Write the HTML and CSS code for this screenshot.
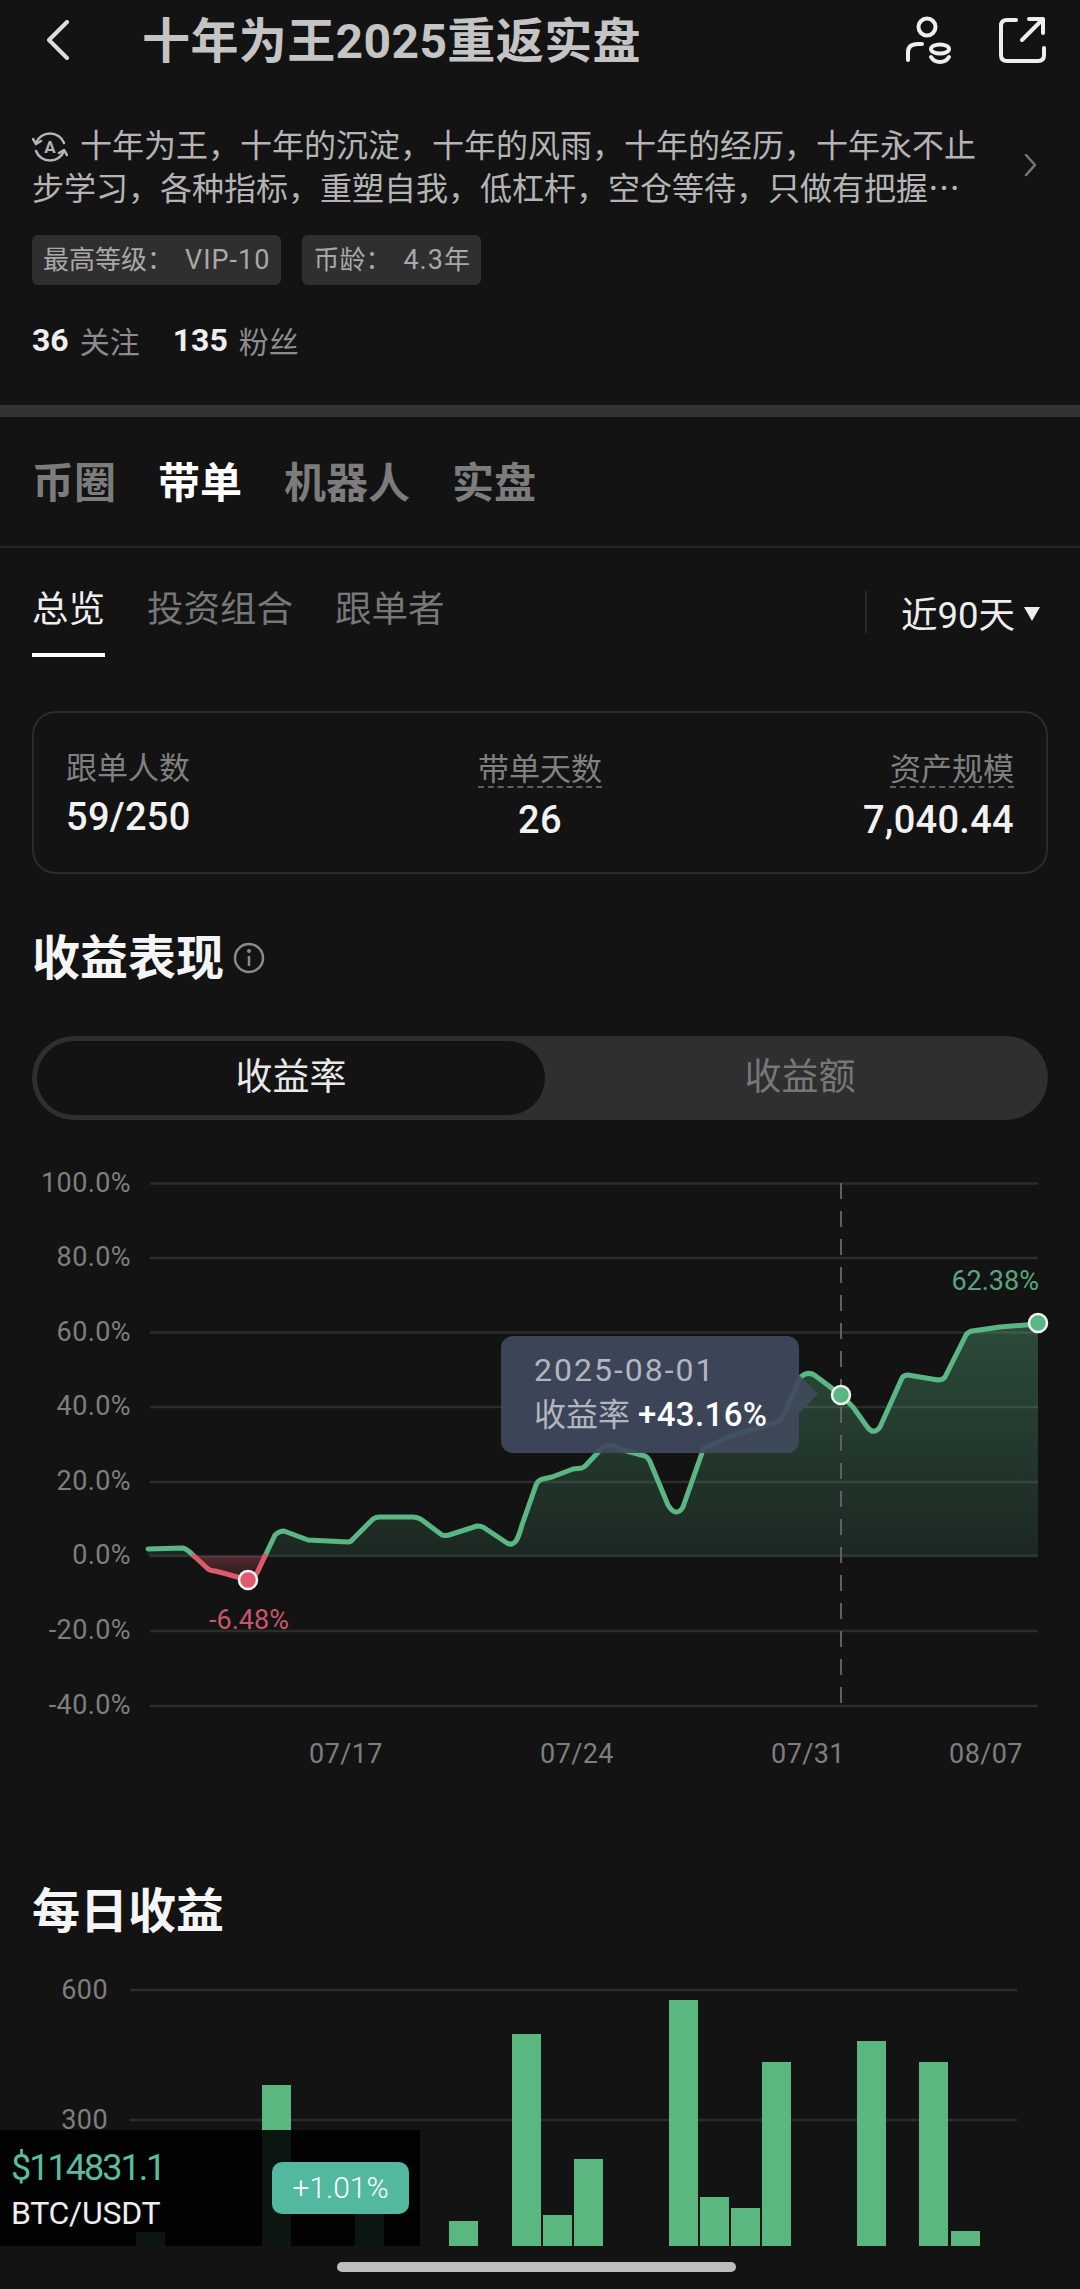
FILE: index.html
```html
<!DOCTYPE html>
<html lang="zh-CN">
<head>
  <meta charset="UTF-8" />
  <title>十年为王2025重返实盘</title>
  <meta name="viewport" content="width=device-width, initial-scale=1" />
  <link rel="stylesheet" href="styles.css">
</head>
<body>

  <header class="topbar">
    <svg class="back" width="24" height="40" viewBox="0 0 24 40"><path d="M21 2 L3 20 L21 38"/></svg>
    <h1 class="title">十年为王2025重返实盘</h1>
    <svg class="top-icon" width="56" height="52" viewBox="0 0 56 52">
      <circle cx="23" cy="13" r="8.5"/>
      <path d="M4 46 V38 Q4 30 14 30 H18"/>
      <ellipse cx="36" cy="35" rx="9" ry="4.5"/>
      <path d="M27 43 Q30 48 36 48 Q42 48 45 43"/>
    </svg>
    <svg class="top-icon share" width="52" height="52" viewBox="0 0 52 52">
      <path d="M20 6 H11 Q5 6 5 12 V41 Q5 47 11 47 H42 Q48 47 48 41 V34"/>
      <path d="M26 26 L47 5 M33 5 H47 V19"/>
    </svg>
  </header>

  <section class="bio">
    <div class="bio-text">
      <svg class="bio-icon" width="36" height="36" viewBox="0 0 36 36">
        <path d="M4 14 A15 15 0 0 1 32 14"/>
        <path d="M32 22 A15 15 0 0 1 4 22"/>
        <path d="M1 10 L4 15 L9 12 M35 26 L32 21 L27 24"/>
        <text x="18" y="24" text-anchor="middle">A</text>
      </svg>十年为王，十年的沉淀，十年的风雨，十年的经历，十年永不止<br>步学习，各种指标，重塑自我，低杠杆，空仓等待，只做有把握…
    </div>
    <svg class="bio-more" width="14" height="24" viewBox="0 0 14 24"><path d="M2 2 L11 12 L2 22"/></svg>
  </section>

  <div class="tags">
    <span class="tag">最高等级：<span class="tag-num">VIP-10</span></span>
    <span class="tag">币龄：<span class="tag-num">4.3</span>年</span>
  </div>

  <div class="follow">
    <b>36</b><span>关注</span>
    <b class="fans">135</b><span>粉丝</span>
  </div>

  <div class="band"></div>

  <nav class="tabs">
    <a>币圈</a>
    <a class="on">带单</a>
    <a>机器人</a>
    <a>实盘</a>
  </nav>

  <nav class="subtabs">
    <a class="on">总览</a>
    <a>投资组合</a>
    <a>跟单者</a>
    <div class="range">近90天<i class="caret"></i></div>
  </nav>

  <section class="card">
    <div class="stat">
      <div class="stat-label">跟单人数</div>
      <div class="stat-value">59/250</div>
    </div>
    <div class="stat stat-mid">
      <div class="stat-label"><span>带单天数</span></div>
      <div class="stat-value">26</div>
    </div>
    <div class="stat stat-end">
      <div class="stat-label"><span>资产规模</span></div>
      <div class="stat-value">7,040.44</div>
    </div>
  </section>

  <h2 class="heading">收益表现
    <svg class="info" width="32" height="32" viewBox="0 0 32 32">
      <circle cx="16" cy="16" r="14"/>
      <path d="M16 14 V24"/>
      <circle class="info-dot" cx="16" cy="9" r="2"/>
    </svg>
  </h2>

  <div class="segment">
    <div class="seg on">收益率</div>
    <div class="seg">收益额</div>
  </div>

  <section class="chart">
    <svg class="chart-svg" width="1080" height="670" viewBox="0 1120 1080 670">
      <defs>
        <linearGradient id="areaGreen" x1="0" y1="0" x2="0" y2="1">
          <stop offset="0" stop-color="#5ab784" stop-opacity="0.34"/>
          <stop offset="1" stop-color="#5ab784" stop-opacity="0.13"/>
        </linearGradient>
        <linearGradient id="areaRed" x1="0" y1="0" x2="0" y2="1">
          <stop offset="0" stop-color="#dd5a6a" stop-opacity="0.32"/>
          <stop offset="1" stop-color="#dd5a6a" stop-opacity="0.08"/>
        </linearGradient>
      </defs>

      <g class="grid">
        <path d="M150 1183.5 H1038"/>
        <path d="M150 1258 H1038"/>
        <path d="M150 1332.5 H1038"/>
        <path d="M150 1407 H1038"/>
        <path d="M150 1482 H1038"/>
        <path d="M150 1556 H1038"/>
        <path d="M150 1631 H1038"/>
        <path d="M150 1706 H1038"/>
      </g>

      <g class="axis-y">
        <text x="131" y="1192">100.0%</text>
        <text x="131" y="1266">80.0%</text>
        <text x="131" y="1341">60.0%</text>
        <text x="131" y="1415">40.0%</text>
        <text x="131" y="1490">20.0%</text>
        <text x="131" y="1564">0.0%</text>
        <text x="131" y="1639">-20.0%</text>
        <text x="131" y="1714">-40.0%</text>
      </g>

      <g class="axis-x">
        <text x="346" y="1763">07/17</text>
        <text x="577" y="1763">07/24</text>
        <text x="808" y="1763">07/31</text>
        <text x="986" y="1763">08/07</text>
      </g>

      <path class="area-red" d="M194 1556 L207 1568 Q210 1571 215 1571 L223 1573 L248 1580 L257 1573 L265 1556 Z"/>
      <path class="area-green" d="M148 1556 V1549 L183 1548 L194 1556 Z M265 1556 L275 1535 Q279 1531 284 1531 L308 1540 L348 1542 Q351 1542 353 1539 L373 1519 Q376 1517 380 1517 L413 1517 Q418 1517 422 1520 L442 1535 Q445 1536 449 1535 L477 1526 Q480 1526 483 1527 L507 1543 Q512 1546 516 1541 Q519 1536 522 1525 L536 1485 Q538 1480 543 1479 L552 1477 L573 1469 L582 1468 Q585 1467 588 1463 L603 1447 Q610 1443 623 1450 L645 1456 Q649 1458 651 1464 L668 1505 Q676 1518 683 1507 L703 1450 Q705 1447 709 1446 L733 1435 L777 1422 Q781 1421 783 1416 L800 1378 Q808 1369 817 1377 L841 1395 L853 1407 L868 1428 Q874 1435 880 1427 L902 1378 Q904 1375 908 1375 L938 1380 Q943 1380 945 1377 L966 1335 Q968 1332 972 1331 L1000 1327 L1038 1324 V1556 Z"/>

      <path class="dash" d="M841 1183 V1706"/>

      <path class="line-green" d="M148 1549 L183 1548 Q187 1549 194 1556 M265 1556 L275 1535 Q279 1531 284 1531 L308 1540 L348 1542 Q351 1542 353 1539 L373 1519 Q376 1517 380 1517 L413 1517 Q418 1517 422 1520 L442 1535 Q445 1536 449 1535 L477 1526 Q480 1526 483 1527 L507 1543 Q512 1546 516 1541 Q519 1536 522 1525 L536 1485 Q538 1480 543 1479 L552 1477 L573 1469 L582 1468 Q585 1467 588 1463 L603 1447 Q610 1443 623 1450 L645 1456 Q649 1458 651 1464 L668 1505 Q676 1518 683 1507 L703 1450 Q705 1447 709 1446 L733 1435 L777 1422 Q781 1421 783 1416 L800 1378 Q808 1369 817 1377 L841 1395 L853 1407 L868 1428 Q874 1435 880 1427 L902 1378 Q904 1375 908 1375 L938 1380 Q943 1380 945 1377 L966 1335 Q968 1332 972 1331 L1000 1327 L1038 1324"/>
      <path class="line-red" d="M194 1556 L207 1568 Q210 1571 215 1571 L223 1573 L248 1580 L257 1573 L265 1556"/>

      <circle class="dot-red" cx="248" cy="1580" r="9"/>
      <circle class="dot-green" cx="841" cy="1395" r="9"/>
      <circle class="dot-green" cx="1038" cy="1323" r="9"/>

      <text class="note-red" x="249" y="1629">-6.48%</text>
      <text class="note-green" x="1039" y="1290">62.38%</text>
    </svg>

    <div class="tip">
      <div class="tip-date">2025-08-01</div>
      <div class="tip-row">收益率 <b>+43.16%</b></div>
    </div>
  </section>

  <h2 class="heading heading-daily">每日收益</h2>

  <section class="bars">
    <svg width="1080" height="349" viewBox="0 1940 1080 349">
      <g class="grid">
        <path d="M130 1990 H1017"/>
        <path d="M130 2120 H1017"/>
      </g>
      <g class="axis-y">
        <text x="108" y="1999">600</text>
        <text x="108" y="2129">300</text>
      </g>
      <g class="bar">
        <rect x="136" y="2232" width="29" height="14"/>
        <rect x="262" y="2085" width="29" height="161"/>
        <rect x="355" y="2213" width="29" height="33"/>
        <rect x="449" y="2221" width="29" height="25"/>
        <rect x="512" y="2034" width="29" height="212"/>
        <rect x="543" y="2215" width="29" height="31"/>
        <rect x="574" y="2159" width="29" height="87"/>
        <rect x="669" y="2000" width="29" height="246"/>
        <rect x="700" y="2197" width="29" height="49"/>
        <rect x="731" y="2208" width="29" height="38"/>
        <rect x="762" y="2062" width="29" height="184"/>
        <rect x="857" y="2041" width="29" height="205"/>
        <rect x="919" y="2062" width="29" height="184"/>
        <rect x="951" y="2231" width="29" height="15"/>
      </g>
    </svg>
  </section>

  <div class="ticker">
    <div class="ticker-info">
      <div class="ticker-price">$114831.1</div>
      <div class="ticker-pair">BTC/USDT</div>
    </div>
    <div class="ticker-change">+1.01%</div>
  </div>

  <div class="home-bar"></div>

</body>
</html>
```

FILE: styles.css
```css
* { box-sizing: border-box; }

body {
  position: relative;
  width: 1080px;
  height: 2289px;
  margin: 0;
  overflow: hidden;
  background-color: #131313;
  color: #fff;
  font-family: Roboto, "Noto Sans CJK SC", sans-serif;
}

/* top bar */
.topbar {
  display: flex;
  align-items: center;
  height: 80px;
  padding: 0 32px 0 46px;
}
.back { flex: none; }
.back path {
  fill: none;
  stroke: #ddd;
  stroke-width: 4;
  stroke-linecap: round;
  stroke-linejoin: round;
}
.title {
  flex: 1;
  margin: 0 0 6px 72px;
  font-size: 48px;
  font-weight: 700;
  letter-spacing: 0.4px;
  color: #c4c4c4;
  white-space: nowrap;
}
.top-icon path, .top-icon circle, .top-icon ellipse {
  fill: none;
  stroke: #eee;
  stroke-width: 4;
  stroke-linecap: round;
  stroke-linejoin: round;
}
.share { margin-left: 36px; }

/* bio */
.bio {
  display: flex;
  align-items: center;
  justify-content: space-between;
  padding: 42px 42px 0 32px;
}
.bio-text {
  font-family: "Noto Sans CJK SC", sans-serif;
  font-size: 32px;
  line-height: 42px;
  color: #b4b4b4;
  white-space: nowrap;
}
.bio-icon {
  margin-right: 12px;
  vertical-align: -8px;
}
.bio-icon path {
  fill: none;
  stroke: #b4b4b4;
  stroke-width: 2.5;
  stroke-linecap: round;
  stroke-linejoin: round;
}
.bio-icon text {
  font-size: 17px;
  font-weight: 700;
  fill: #b4b4b4;
}
.bio-more path {
  fill: none;
  stroke: #777;
  stroke-width: 2.5;
  stroke-linecap: round;
  stroke-linejoin: round;
}

.tags {
  display: flex;
  gap: 21px;
  margin: 28px 0 0 32px;
}
.tag {
  height: 50px;
  padding: 0 11px;
  border-radius: 6px;
  background-color: #2f2f2f;
  color: #a8a8a8;
  font-size: 26px;
  line-height: 50px;
}
.tag-num {
  margin-left: 12px;
  font-size: 27px;
  letter-spacing: 1px;
}

.follow {
  display: flex;
  align-items: center;
  height: 40px;
  margin: 35px 0 0 32px;
  font-size: 30px;
  color: #8c8c8c;
}
.follow b { margin-right: 11px; font-size: 32px; color: #eee; font-weight: 700; }
.follow .fans { margin-left: 33px; }

.band {
  height: 12px;
  margin-top: 45px;
  background-color: #333;
}

/* tabs */
.tabs {
  display: flex;
  align-items: center;
  gap: 42px;
  height: 131px;
  padding: 0 0 5px 32px;
  border-bottom: 2px solid #262626;
  font-size: 42px;
  font-weight: 700;
  color: #7c7c7c;
}
.tabs .on { color: #fff; }

.subtabs {
  display: flex;
  gap: 42px;
  height: 109px;
  padding: 37px 32px 0;
  font-size: 36.5px;
  color: #777;
}
.subtabs a { height: 72px; line-height: 50px; }
.subtabs .on {
  border-bottom: 4px solid #fff;
  color: #eee;
}
.range {
  display: flex;
  align-items: center;
  height: 42px;
  margin: 6px 8px 0 auto;
  padding-left: 34px;
  border-left: 2px solid #2a2a2a;
  color: #eee;
}
.caret {
  width: 0;
  height: 0;
  margin: 4px 0 0 9px;
  border-left: 8px solid transparent;
  border-right: 8px solid transparent;
  border-top: 14px solid #eee;
}

/* summary card */
.card {
  display: grid;
  grid-template-columns: 1fr auto 1fr;
  height: 163px;
  margin: 54px 32px 0;
  padding: 36px 32px 0;
  border: 2px solid #2b2b2b;
  border-radius: 24px;
}
.stat-label {
  height: 40px;
  font-size: 31px;
  line-height: 40px;
  color: #808080;
}
.stat-value {
  margin-top: 6px;
  font-size: 38px;
  font-weight: 500;
  line-height: 44px;
  letter-spacing: 0.3px;
  color: #f2f2f2;
}
.stat-mid { text-align: center; }
.stat-end { text-align: right; }
.stat-mid, .stat-end { margin-top: 1px; }
.stat-mid .stat-value, .stat-end .stat-value { margin-top: 8px; }
.stat-label span {
  display: inline-block;
  height: 38px;
  border-bottom: 2px dashed #5f5f5f;
}

/* section titles */
.heading {
  display: flex;
  align-items: center;
  gap: 9px;
  height: 60px;
  margin: 50px 0 0 32px;
  font-size: 48px;
  font-weight: 700;
  color: #f5f5f5;
}
.heading-daily { margin: 87px 0 3px 32px; }
.info { margin-top: 8px; }
.info circle, .info path {
  fill: none;
  stroke: #8a8a8a;
  stroke-width: 2.5;
}
.info .info-dot { fill: #8a8a8a; stroke: none; }

/* segmented control */
.segment {
  display: flex;
  height: 84px;
  margin: 52px 32px 0;
  padding: 5px;
  border-radius: 42px;
  background-color: #2f2f2f;
  font-size: 37px;
  color: #777;
}
.seg {
  flex: 1;
  padding-left: 12px;
  border-radius: 37px;
  line-height: 74px;
  text-align: center;
}
.seg.on {
  flex: none;
  width: 508px;
  padding-left: 0;
  background-color: #131313;
  color: #e8e8e8;
}

/* charts */
.chart { position: relative; height: 670px; }
svg text { font-family: Roboto, "Noto Sans CJK SC", sans-serif; }
.chart-svg, .bars svg { display: block; }
.grid path { fill: none; stroke: #2c2c2c; stroke-width: 2.5; }
.axis-y text { font-size: 27px; letter-spacing: 0.4px; fill: #7e7e7e; text-anchor: end; }
.axis-x text { font-size: 27px; letter-spacing: 0.4px; fill: #7e7e7e; text-anchor: middle; }
.area-green { fill: url(#areaGreen); }
.area-red { fill: url(#areaRed); }
.dash { fill: none; stroke: #606060; stroke-width: 2; stroke-dasharray: 16 12; }
.line-green, .line-red {
  fill: none;
  stroke-width: 5;
  stroke-linecap: round;
  stroke-linejoin: round;
}
.line-green { stroke: #5ab784; }
.line-red { stroke: #dd5a6a; }
.dot-green { fill: #5ab784; stroke: #f2f2f2; stroke-width: 2.5; }
.dot-red { fill: #e05a6d; stroke: #f2f2f2; stroke-width: 2.5; }
.note-red { font-size: 27px; fill: #c9566a; text-anchor: middle; }
.note-green { font-size: 27px; fill: #5aa57f; text-anchor: end; }

.tip {
  position: absolute;
  left: 501px;
  top: 216px;
  width: 298px;
  height: 117px;
  padding: 12px 0 0 33px;
  border-radius: 12px;
  background-color: rgba(64, 73, 92, 0.93);
}
.tip::after {
  content: "";
  position: absolute;
  right: -19px;
  top: 39px;
  border-top: 19px solid transparent;
  border-bottom: 19px solid transparent;
  border-left: 19px solid rgba(64, 73, 92, 0.93);
}
.tip-date {
  font-size: 32px;
  line-height: 44px;
  letter-spacing: 2px;
  color: #b2b6bf;
}
.tip-row {
  font-size: 32px;
  line-height: 46px;
  color: #b2b6bf;
}
.tip-row b {
  font-size: 33px;
  font-weight: 500;
  letter-spacing: 0.4px;
  color: #fff;
}

.bars { height: 349px; }
.bar rect { fill: #5ab780; }

/* floating price widget */
.ticker {
  position: absolute;
  left: 0;
  top: 2130px;
  display: flex;
  justify-content: space-between;
  width: 420px;
  height: 116px;
  padding: 14px 11px 0 11px;
  background-color: rgba(0, 0, 0, 0.88);
}
.ticker-price {
  font-size: 36px;
  line-height: 48px;
  letter-spacing: -2px;
  color: #5bbd9c;
}
.ticker-pair {
  font-size: 32px;
  line-height: 42px;
  letter-spacing: -0.3px;
  color: #eee;
}
.ticker-change {
  width: 137px;
  height: 52px;
  margin-top: 18px;
  border-radius: 10px;
  background-color: #52b9a0;
  font-size: 30px;
  font-weight: 300;
  line-height: 52px;
  text-align: center;
}

.home-bar {
  position: absolute;
  left: 337px;
  top: 2262px;
  width: 399px;
  height: 10px;
  border-radius: 5px;
  background-color: #bdbdbd;
}
```
